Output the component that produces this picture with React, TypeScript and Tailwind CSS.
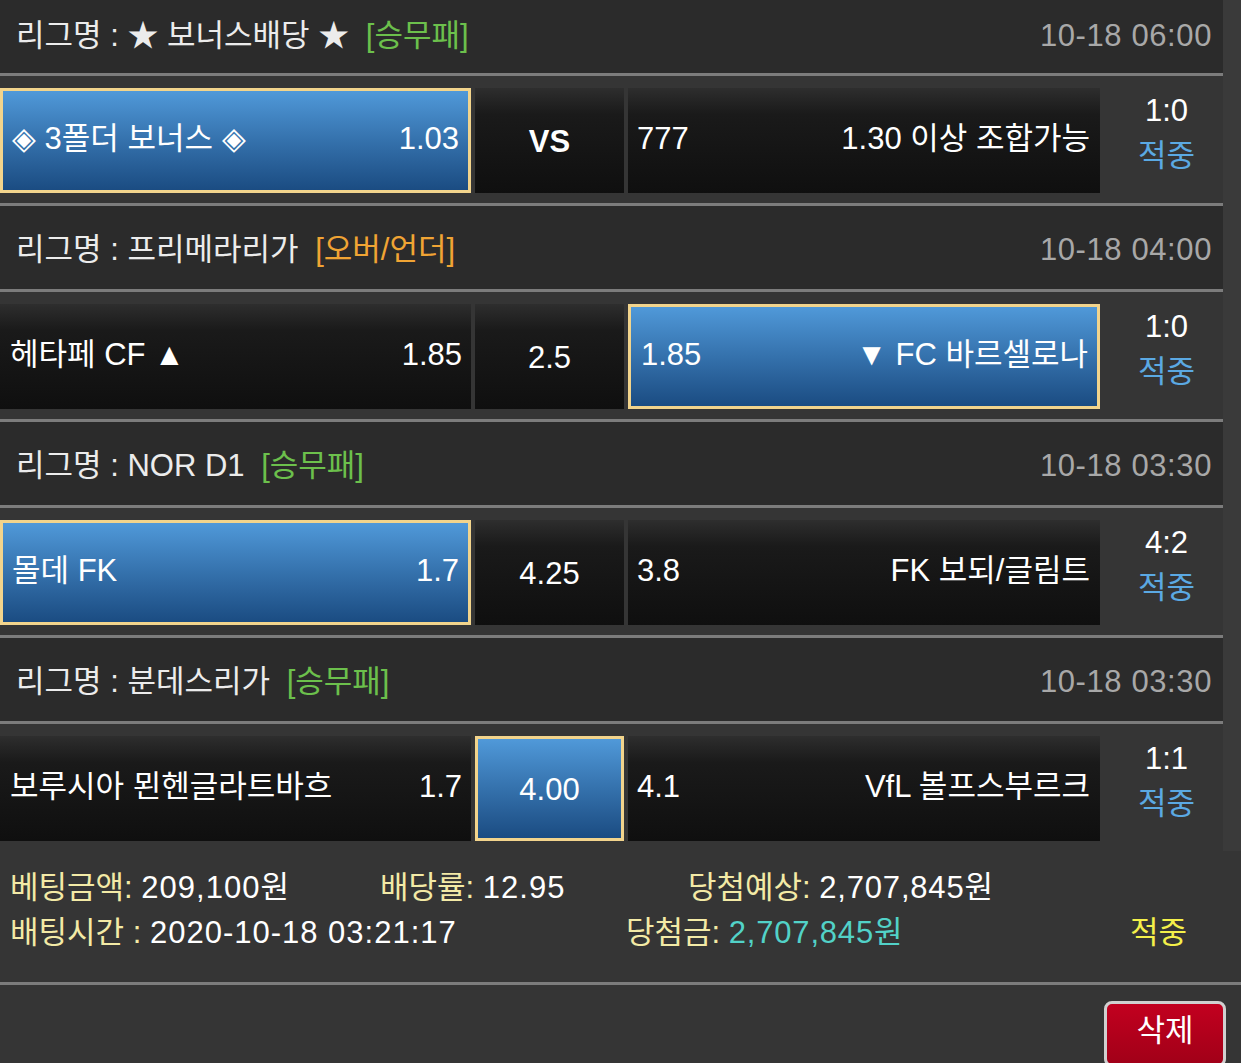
import React from "react";

type Pick = "home" | "mid" | "away";

interface Match {
  league: string;
  type: string;
  typeColor: string;
  date: string;
  home: string;
  homeOdds: string;
  mid: string;
  awayOdds: string;
  away: string;
  score: string;
  pick: Pick;
}

const matches: Match[] = [
  {
    league: "★ 보너스배당 ★",
    type: "[승무패]",
    typeColor: "text-[#6cc04c]",
    date: "10-18 06:00",
    home: "◈ 3폴더 보너스 ◈",
    homeOdds: "1.03",
    mid: "VS",
    awayOdds: "777",
    away: "1.30 이상 조합가능",
    score: "1:0",
    pick: "home",
  },
  {
    league: "프리메라리가",
    type: "[오버/언더]",
    typeColor: "text-[#f0a434]",
    date: "10-18 04:00",
    home: "헤타페 CF ▲",
    homeOdds: "1.85",
    mid: "2.5",
    awayOdds: "1.85",
    away: "▼ FC 바르셀로나",
    score: "1:0",
    pick: "away",
  },
  {
    league: "NOR D1",
    type: "[승무패]",
    typeColor: "text-[#6cc04c]",
    date: "10-18 03:30",
    home: "몰데 FK",
    homeOdds: "1.7",
    mid: "4.25",
    awayOdds: "3.8",
    away: "FK 보되/글림트",
    score: "4:2",
    pick: "home",
  },
  {
    league: "분데스리가",
    type: "[승무패]",
    typeColor: "text-[#6cc04c]",
    date: "10-18 03:30",
    home: "보루시아 묀헨글라트바흐",
    homeOdds: "1.7",
    mid: "4.00",
    awayOdds: "4.1",
    away: "VfL 볼프스부르크",
    score: "1:1",
    pick: "mid",
  },
];

const cellBase = "h-[105px] flex items-center box-border";
const darkCell =
  "bg-linear-to-b from-[#2e2e2e] via-[#1a1a1a] via-25% to-[#0f0f0f]";
const blueCell =
  "bg-linear-to-b from-[#5099d9] to-[#1b4c82] border-[3px] border-[#f2d48c]";

const Line = () => <div className="h-[3px] bg-[#7c7c7c]" />;

function MatchBlock({ m, first, last }: { m: Match; first: boolean; last: boolean }) {
  return (
    <div>
      {/* league header */}
      <div
        className={`flex items-center justify-between bg-[#2b2b2b] pl-[16px] pr-[11px] ${
          first ? "h-[73px] pb-[1px]" : "h-[83px] pt-[5px]"
        }`}
      >
        <div className="text-[#ececec]">
          리그명 : {m.league} <span className={`ml-2 ${m.typeColor}`}>{m.type}</span>
        </div>
        <div className="text-[#a8a8a8] tracking-[0.6px]">{m.date}</div>
      </div>
      <Line />

      {/* odds row */}
      <div className="flex h-[127px] bg-[#353535] pt-[12px]">
        <div
          className={`${cellBase} w-[471px] justify-between pb-[4px] ${
            m.pick === "home" ? `${blueCell} pl-[9px] pr-[9px]` : `${darkCell} pl-[10px] pr-[9px]`
          }`}
        >
          <span className="whitespace-nowrap">{m.home}</span>
          <span>{m.homeOdds}</span>
        </div>
        <div
          className={`${cellBase} ml-[4px] w-[149px] justify-center pt-[2px] ${
            m.pick === "mid" ? blueCell : darkCell
          } ${m.mid === "VS" ? "font-bold" : ""}`}
        >
          {m.mid}
        </div>
        <div
          className={`${cellBase} ml-[4px] w-[472px] justify-between pb-[4px] ${
            m.pick === "away" ? `${blueCell} pl-[10px] pr-[9px]` : `${darkCell} pl-[9px] pr-[10px]`
          }`}
        >
          <span>{m.awayOdds}</span>
          <span className="whitespace-nowrap">{m.away}</span>
        </div>
        <div className="flex-1 flex flex-col items-center leading-[45px] pl-[10px]">
          <span>{m.score}</span>
          <span className="text-[#5ba9e3]">적중</span>
        </div>
      </div>
      {!last && <Line />}
    </div>
  );
}

export default function App() {
  return (
    <div className="w-[1241px] h-[1063px] overflow-hidden bg-[#353535] text-white text-[31px] leading-[36px] font-['Liberation_Sans','Noto_Sans_CJK_KR',sans-serif]">
      <div className="flex">
        <div className="w-[1223px]">
          {matches.map((m, i) => (
            <MatchBlock key={i} m={m} first={i === 0} last={i === matches.length - 1} />
          ))}
        </div>
        <div className="flex-1 bg-[#3a3a3a]" />
      </div>

      {/* bet summary */}
      <div className="h-[131px] pt-[14px] pl-[10px] leading-[45px]">
        <div className="flex whitespace-nowrap">
          <span className="w-[370px]">
            <span className="text-[#f3eaa6]">베팅금액:</span>{" "}
            <span className="tracking-[1px]">209,100</span>원
          </span>
          <span className="w-[308px]">
            <span className="text-[#f3eaa6]">배당률:</span>{" "}
            <span className="tracking-[1px]">12.95</span>
          </span>
          <span>
            <span className="text-[#f3eaa6]">당첨예상:</span>{" "}
            <span className="tracking-[0.8px]">2,707,845</span>원
          </span>
        </div>
        <div className="flex whitespace-nowrap">
          <span className="w-[616px]">
            <span className="text-[#f3eaa6]">배팅시간 :</span>{" "}
            <span className="tracking-[1px]">2020-10-18 03:21:17</span>
          </span>
          <span className="w-[504px]">
            <span className="text-[#f3eaa6]">당첨금:</span>{" "}
            <span className="text-[#52d2c8]">
              <span className="tracking-[0.8px]">2,707,845</span>원
            </span>
          </span>
          <span className="text-[#f4f04a]">적중</span>
        </div>
      </div>
      <Line />

      <div className="flex justify-end pr-[15px] pt-[16px]">
        <button className="w-[122px] h-[66px] rounded-[8px] border-[3px] border-[#d0d0d0] bg-linear-to-b from-[#c2001f] to-[#a10018] text-white text-[31px] leading-none pb-[8px]">
          삭제
        </button>
      </div>
    </div>
  );
}
